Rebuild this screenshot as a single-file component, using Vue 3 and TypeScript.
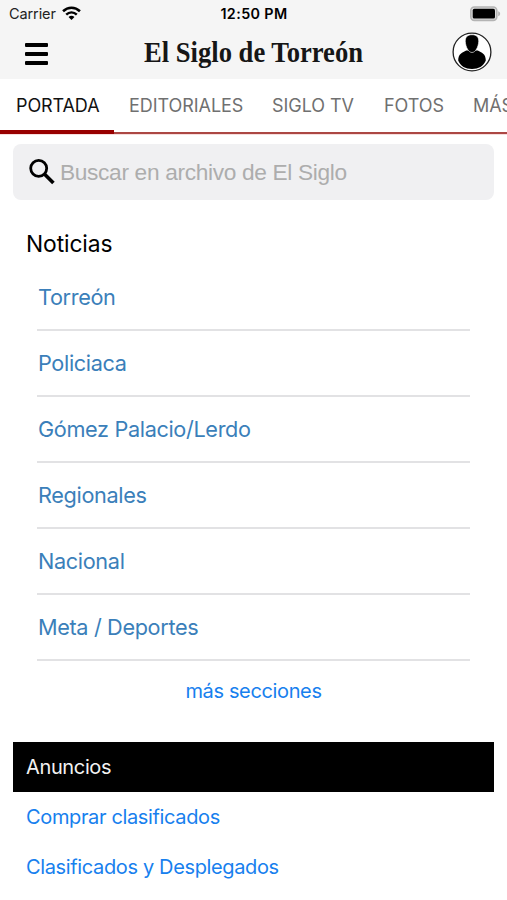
<script setup lang="ts">
interface Tab {
  label: string
  cls: string
}

const tabs: Tab[] = [
  { label: 'PORTADA', cls: 'portada active' },
  { label: 'EDITORIALES', cls: 'editoriales' },
  { label: 'SIGLO TV', cls: 'siglo' },
  { label: 'FOTOS', cls: 'fotos' },
  { label: 'MÁS', cls: 'mas' },
]

const sections: string[] = [
  'Torreón',
  'Policiaca',
  'Gómez Palacio/Lerdo',
  'Regionales',
  'Nacional',
  'Meta / Deportes',
]

const ads: string[] = ['Comprar clasificados', 'Clasificados y Desplegados']
</script>

<template>
  <div class="screen">
    <header class="top">
      <div class="status">
        <div class="carrier">
          <span>Carrier</span>
          <svg width="19" height="15" viewBox="0 0 18 14" fill="none" stroke="#000">
            <path d="M1 4.9C5.6.5 12.4.5 17 4.9" stroke-width="2.4" />
            <path d="M4 8C6.9 5.2 11.1 5.2 14 8" stroke-width="2.3" />
            <path d="M6.2 10.3C7.9 8.8 10.1 8.8 11.8 10.3L9 13.2Z" fill="#000" stroke="none" />
          </svg>
        </div>
        <span class="time">12:50 PM</span>
        <svg class="battery" width="31" height="16" viewBox="0 0 31 16">
          <rect x="0.8" y="1" width="26" height="13.4" rx="3.6" fill="#ddd" stroke="#b4b4b4" stroke-width="1.6" />
          <rect x="2.7" y="2.8" width="22.3" height="9.8" rx="1.6" fill="#000" />
          <path d="M28.2 5.2c2.6 .8 2.6 4.2 0 5Z" fill="#b4b4b4" />
        </svg>
      </div>
      <div class="bar">
        <button class="menu" aria-label="Menú">
          <i></i><i></i><i></i>
        </button>
        <svg class="logo" width="222" height="40" viewBox="0 0 222 40">
          <text x="1" y="29" textLength="219" lengthAdjust="spacingAndGlyphs">El Siglo de Torreón</text>
        </svg>
        <svg class="avatar" width="40" height="40" viewBox="0 0 40 40">
          <circle cx="20" cy="20" r="18.9" fill="#fff" stroke="#222" stroke-width="1.3" />
          <path d="M14.2 18.4C10.5 21 6.2 21 6.2 28.6C8.6 34.4 13.5 37 20 37S31.4 34.4 33.8 28.6C33.8 21 29.5 21 25.8 18.4Z" />
          <path
            d="M20 2.7c-4.6 0-6.9 2.5-6.7 6.8.2 2.8.9 5.6 2.3 7.8 1.1 1.8 2.6 3.2 4.4 3.2s3.3-1.4 4.4-3.2c1.4-2.2 2.1-5 2.3-7.8.2-4.3-2.1-6.8-6.7-6.8Z"
            stroke="#fff"
            stroke-width="0.6"
          />
        </svg>
      </div>
    </header>

    <nav class="tabs">
      <a v-for="tab in tabs" :key="tab.label" class="tab" :class="tab.cls"><span>{{ tab.label }}</span></a>
    </nav>

    <main>
      <label class="search">
        <svg width="28" height="28" viewBox="0 0 28 28" fill="none" stroke="#000">
          <circle cx="10.7" cy="10.3" r="8" stroke-width="2.8" />
          <path d="M16.4 16L25.4 25" stroke-width="3.6" />
        </svg>
        <span>Buscar en archivo de El Siglo</span>
      </label>

      <h2>Noticias</h2>
      <ul class="sections">
        <li v-for="item in sections" :key="item">
          <a>{{ item }}</a>
        </li>
      </ul>
      <a class="more">más secciones</a>

      <h3>Anuncios</h3>
      <div class="ads">
        <a v-for="ad in ads" :key="ad">{{ ad }}</a>
      </div>
    </main>
  </div>
</template>

<style>
body {
  margin: 0;
  background: #fff;
}
</style>

<style scoped>
.screen {
  box-sizing: border-box;
  width: 507px;
  height: 900px;
  overflow: hidden;
  background: #fff;
  font-family: Inter, 'Liberation Sans', sans-serif;
  color: #000;
}
.top {
  height: 79px;
  background: #f5f5f5;
}
.status {
  height: 27px;
  display: grid;
  grid-template-columns: 1fr auto 1fr;
  align-items: center;
  padding: 0 6px 0 9px;
  font-size: 14.5px;
}
.carrier {
  display: flex;
  align-items: center;
  gap: 6px;
  letter-spacing: -0.1px;
  color: #222;
}
.time {
  font-weight: 600;
  font-size: 14.3px;
  letter-spacing: 0.4px;
  transform: translateX(-1px);
}
.battery {
  justify-self: end;
}
.bar {
  height: 52px;
  display: flex;
  align-items: center;
  padding: 0 15px 0 25px;
}
.menu {
  display: flex;
  flex-direction: column;
  gap: 5px;
  padding: 0;
  margin: 2px 0 0;
  border: 0;
  background: none;
}
.menu i {
  width: 23px;
  height: 4px;
  border-radius: 1px;
  background: #000;
}
.logo {
  margin-left: 95px;
  overflow: visible;
}
.logo text {
  font-family: 'Liberation Serif', serif;
  font-weight: 700;
  font-size: 29px;
  fill: #161616;
}
.avatar {
  margin-left: auto;
  margin-bottom: 2px;
}
.tabs {
  height: 55px;
  box-sizing: border-box;
  display: flex;
  white-space: nowrap;
  border-bottom: 2px solid #ac4744;
  box-shadow: 0 1px 0 #f7dedd;
}
.tab {
  box-sizing: border-box;
  height: 55px;
  flex: none;
  padding: 0 15px;
  line-height: 54px;
  font-size: 18px;
  letter-spacing: -0.05px;
  color: #707070;
}
.tab.active {
  color: #111;
  padding-left: 16px;
  border-bottom: 4px solid #980000;
}
.tab.portada {
  width: 114px;
  letter-spacing: -0.1px;
}
.editoriales {
  width: 143px;
}
.siglo {
  width: 112px;
}
.fotos {
  width: 89px;
}
main {
  display: flex;
  flex-direction: column;
  padding: 10px 13px 0;
}
.search {
  height: 56px;
  display: flex;
  align-items: center;
  padding-left: 15px;
  gap: 4px;
  border-radius: 8px;
  background: #f0f0f2;
  font: 22.7px 'Liberation Sans', sans-serif;
  letter-spacing: -0.33px;
  color: #adadad;
}
h2 {
  margin: 29px 0 0 13px;
  font-size: 22.8px;
  line-height: 30px;
  font-weight: 400;
  letter-spacing: -0.1px;
}
.sections {
  list-style: none;
  margin: 6px 24px 0;
  padding: 0;
}
.sections li {
  box-sizing: border-box;
  height: 66px;
  line-height: 65px;
  border-bottom: 2px solid #e2e2e4;
  font-size: 21.7px;
  letter-spacing: -0.36px;
  color: #3b7fba;
  padding-left: 1px;
}
.more {
  margin-top: 17px;
  line-height: 26px;
  text-align: center;
  font-size: 20px;
  letter-spacing: -0.36px;
  color: #1780ee;
}
h3 {
  margin: 38px 0 0;
  height: 50px;
  line-height: 50px;
  padding-left: 13px;
  background: #000;
  color: #f2f2f2;
  font-weight: 400;
  font-size: 20px;
  letter-spacing: -0.36px;
}
.ads {
  display: flex;
  flex-direction: column;
  padding-left: 13px;
}
.ads a {
  line-height: 50px;
  font-size: 20px;
  letter-spacing: -0.36px;
  color: #1780ee;
}
</style>
